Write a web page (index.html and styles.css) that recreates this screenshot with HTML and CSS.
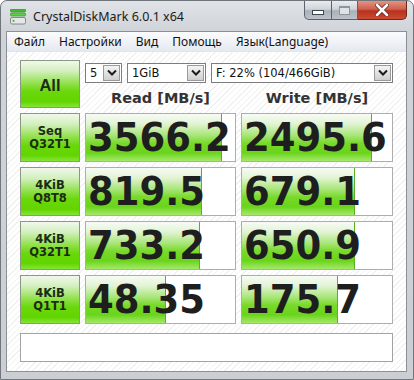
FILE: index.html
```html
<!DOCTYPE html>
<html lang="ru">
<head>
    <meta charset="UTF-8">
    <title>CrystalDiskMark 6.0.1 x64</title>
    <link rel="stylesheet" href="styles.css">
</head>
<body>
    <div class="window">
        <div class="titlebar">
            <svg class="app-icon" viewBox="0 0 16 16" width="16" height="16">
                <rect x="0.5" y="0" width="15" height="3" rx="1" fill="#3fbf2a" stroke="#2a8a1c" stroke-width="0.6"/>
                <rect x="0.5" y="4" width="15" height="3" rx="1" fill="#5fd14a" stroke="#2a8a1c" stroke-width="0.6"/>
                <rect x="0.5" y="8.5" width="15" height="6.5" rx="1.5" fill="#e4e6e8" stroke="#6d7278" stroke-width="0.8"/>
                <circle cx="3.5" cy="11.8" r="1.1" fill="#3fbf2a"/>
            </svg>
            <span class="title">CrystalDiskMark 6.0.1 x64</span>
            <div class="controls">
                <div class="ctl ctl-min"><span class="glyph-min"></span></div>
                <div class="ctl ctl-max"><span class="glyph-max"></span></div>
                <div class="ctl ctl-close">
                    <svg viewBox="0 0 14 12" width="14" height="12">
                        <path d="M2 1 L12 11 M12 1 L2 11" stroke="#6a2219" stroke-width="4.2" stroke-linecap="round"/>
                        <path d="M2 1 L12 11 M12 1 L2 11" stroke="#fff" stroke-width="2.6" stroke-linecap="round"/>
                    </svg>
                </div>
            </div>
        </div>

        <div class="inner">
            <div class="menubar">
                <span>Файл</span>
                <span>Настройки</span>
                <span>Вид</span>
                <span>Помощь</span>
                <span>Язык(Language)</span>
            </div>

            <div class="client">
                <div class="btn btn-all">All</div>

                <div class="selects">
                    <div class="select sel-count">
                        <span class="val">5</span>
                        <span class="arrow"><svg viewBox="0 0 12 8" width="12" height="8"><polyline points="2,1.5 6,5.5 10,1.5" fill="none" stroke="#1c1c1c" stroke-width="2"/></svg></span>
                    </div>
                    <div class="select sel-size">
                        <span class="val">1GiB</span>
                        <span class="arrow"><svg viewBox="0 0 12 8" width="12" height="8"><polyline points="2,1.5 6,5.5 10,1.5" fill="none" stroke="#1c1c1c" stroke-width="2"/></svg></span>
                    </div>
                    <div class="select sel-drive">
                        <span class="val">F: 22% (104/466GiB)</span>
                        <span class="arrow"><svg viewBox="0 0 12 8" width="12" height="8"><polyline points="2,1.5 6,5.5 10,1.5" fill="none" stroke="#1c1c1c" stroke-width="2"/></svg></span>
                    </div>
                </div>

                <div class="head">Read [MB/s]</div>
                <div class="head">Write [MB/s]</div>

                <div class="btn btn-test">Seq<br>Q32T1</div>
                <div class="cell"><div class="bar" style="width: 91%"></div><span class="num">3566.2</span></div>
                <div class="cell"><div class="bar" style="width: 86.5%"></div><span class="num">2495.6</span></div>

                <div class="btn btn-test">4KiB<br>Q8T8</div>
                <div class="cell"><div class="bar" style="width: 78%"></div><span class="num">819.5</span></div>
                <div class="cell"><div class="bar" style="width: 75%"></div><span class="num">679.1</span></div>

                <div class="btn btn-test">4KiB<br>Q32T1</div>
                <div class="cell"><div class="bar" style="width: 76.5%"></div><span class="num">733.2</span></div>
                <div class="cell"><div class="bar" style="width: 75.5%"></div><span class="num">650.9</span></div>

                <div class="btn btn-test">4KiB<br>Q1T1</div>
                <div class="cell"><div class="bar" style="width: 54%"></div><span class="num">48.35</span></div>
                <div class="cell"><div class="bar" style="width: 64%"></div><span class="num">175.7</span></div>

                <div class="status"></div>
            </div>
        </div>
    </div>
</body>
</html>
```

FILE: styles.css
```css
* {
    margin: 0;
    padding: 0;
    box-sizing: border-box;
}

body {
    width: 414px;
    height: 380px;
    background: #ffffff;
    font-family: 'Noto Sans', 'DejaVu Sans', sans-serif;
    overflow: hidden;
}

/* Window frame (Windows 7 basic) */
.window {
    width: 414px;
    height: 380px;
    border: 1px solid #71767d;
    border-radius: 7px 7px 0 0;
    background: linear-gradient(#dfe2e6, #d0d4d9 30px, #cbcfd4);
    padding: 0 6px 7px 5px;
    display: flex;
    flex-direction: column;
}

.titlebar {
    height: 30px;
    display: flex;
    align-items: center;
    padding-left: 4px;
}

.app-icon {
    margin-top: 1px;
}

.title {
    margin-left: 7px;
    font-size: 12.5px;
    color: #1a1a1a;
}

.controls {
    margin-left: auto;
    align-self: flex-start;
    display: flex;
    height: 20px;
}

.ctl {
    height: 19px;
    border: 1px solid #5c636c;
    border-top: none;
    display: flex;
    align-items: center;
    justify-content: center;
}

.ctl-min {
    width: 28px;
    border-radius: 0 0 0 5px;
    background: linear-gradient(#e9ecef, #cfd4d9 45%, #aab1b9 55%, #bcc2c9);
}

.ctl-max {
    width: 26px;
    border-left: none;
    background: linear-gradient(#e9ecef, #cfd4d9 45%, #aab1b9 55%, #bcc2c9);
}

.ctl-close {
    width: 49px;
    border-left: none;
    border-color: #6e251c;
    border-radius: 0 0 5px 0;
    background: linear-gradient(#e39483, #d0604d 45%, #b8321f 55%, #c94a32);
}

.glyph-min {
    width: 12px;
    height: 5px;
    margin-top: 5px;
    background: #fff;
    border: 1px solid #3e4650;
}

.glyph-max {
    width: 11px;
    height: 9px;
    border: 1px solid #8d949c;
    border-top-width: 2px;
    background: #dfe2e5;
}

/* Menu bar + client share the inner border */
.inner {
    flex: 1;
    border: 1px solid #8b9097;
    display: flex;
    flex-direction: column;
}

.menubar {
    height: 20px;
    display: flex;
    align-items: center;
    gap: 14px;
    padding-left: 7px;
    font-size: 12px;
    color: #111;
    background: linear-gradient(#fbfcfd, #eef1f6 60%, #e4e9f0);
    border-bottom: 1px solid #e2e6ec;
}

.client {
    flex: 1;
    display: grid;
    grid-template-columns: 60px 151px 152px;
    grid-template-rows: 23px 20px repeat(4, 49px) 29px;
    column-gap: 5px;
    row-gap: 5px;
    padding: 8px 13px 0 13px;
    background: repeating-linear-gradient(135deg, #ffffff 0, #ffffff 3px, #f1f1f1 3px, #f1f1f1 4px);
}

/* Green buttons */
.btn {
    border: 1px solid #8a9a82;
    background: linear-gradient(#f1f8ec, #d2efbd 22%, #93e14f 48%, #6ad80c 66%, #62d500 88%, #86e43a);
    color: #1c2c12;
    font-family: 'DejaVu Sans', sans-serif;
    font-weight: bold;
    display: flex;
    align-items: center;
    justify-content: center;
    text-align: center;
}

.btn-all {
    grid-row: 1 / 3;
    font-family: 'Liberation Sans', Arial, sans-serif;
    font-size: 16.5px;
    padding-top: 2px;
}

.btn-test {
    font-size: 11.5px;
    line-height: 13px;
}

/* Dropdowns */
.selects {
    grid-column: 2 / 4;
    display: flex;
    gap: 5px;
    margin-top: 3px;
    height: 20px;
}

.select {
    height: 20px;
    display: flex;
    align-items: center;
    border: 1px solid #7d7d7d;
    background: #fff;
    font-family: 'DejaVu Sans', sans-serif;
    font-size: 11.5px;
    color: #111;
}

.sel-count { width: 37px; }
.sel-size { width: 79px; }
.sel-drive { width: 182px; }

.select .val {
    flex: 1;
    padding-left: 4px;
    white-space: nowrap;
}

.select .arrow {
    width: 17px;
    height: 16px;
    margin-right: 1px;
    border: 1px solid #9a9a9a;
    background: linear-gradient(#f4f4f4, #e2e2e2 50%, #cfcfcf);
    display: flex;
    align-items: center;
    justify-content: center;
}

/* Column headers */
.head {
    font-family: 'DejaVu Sans', sans-serif;
    font-weight: bold;
    font-size: 14.5px;
    color: #333;
    text-align: center;
    line-height: 20px;
}

/* Result cells */
.cell {
    position: relative;
    border: 1px solid #adadad;
    background: #fff;
    display: flex;
    align-items: center;
    overflow: hidden;
}

.bar {
    position: absolute;
    left: 0;
    top: 0;
    bottom: 0;
    border-right: 1px solid #5aae2a;
    background: linear-gradient(#f7fbf4, #e3f4d6 20%, #a9e679 45%, #78d92a 62%, #6ad41a 82%, #a5e86a);
}

.num {
    position: relative;
    padding-left: 2px;
    font-family: 'DejaVu Sans', sans-serif;
    font-weight: bold;
    font-size: 37px;
    line-height: 1;
    color: #1e1e1e;
    white-space: nowrap;
    transform: scaleY(1.07);
}

.status {
    grid-column: 1 / 4;
    margin-top: 4px;
    height: 29px;
    border: 1px solid #a3a3a3;
    background: #fff;
}
```
